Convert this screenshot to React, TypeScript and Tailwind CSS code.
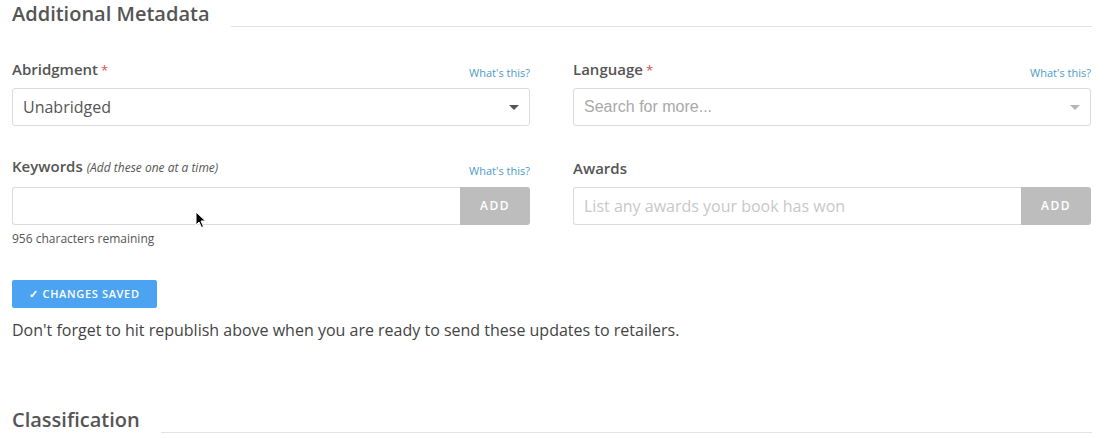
import React from "react";

const font = { fontFamily: '"Open Sans", "Liberation Sans", sans-serif' };

function Label({ children, what }: { children: React.ReactNode; what?: boolean }) {
  return (
    <div className="flex items-end justify-between h-5 mb-2">
      <div className="text-[15px] leading-5 font-semibold text-[#555]">{children}</div>
      {what && <a className="text-[11px] leading-4 text-[#4b9cc8] mb-[-1px]">What's this?</a>}
    </div>
  );
}

function Req() {
  return <span className="text-[#d9534f] text-[13px] ml-[3px] font-normal">*</span>;
}

function Caret({ color }: { color: string }) {
  return (
    <svg width="10" height="5" viewBox="0 0 10 5" className="shrink-0">
      <path d="M0 0 L10 0 L5 5 Z" fill={color} />
    </svg>
  );
}

export default function App() {
  return (
    <div className="relative w-[1114px] h-[438px] bg-white overflow-hidden pl-3 pr-[22px]" style={font}>
      <div className="flex items-end h-7">
        <h2 className="text-[20px] leading-7 font-semibold text-[#555] whitespace-nowrap">Additional Metadata</h2>
        <div className="flex-1 h-px bg-[#e3e3e3] ml-[21px] mb-[1px]" />
      </div>

      <div className="grid grid-cols-[518px_518px] gap-x-[43px] mt-8">
        <div>
          <Label what>
            Abridgment<Req />
          </Label>
          <div className="h-[38px] border border-[#dcdcdc] rounded-[3px] flex items-center justify-between pl-[10px] pr-[10px]">
            <span className="text-[16px] text-[#555]">Unabridged</span>
            <Caret color="#555" />
          </div>
        </div>
        <div>
          <Label what>
            Language<Req />
          </Label>
          <div className="h-[38px] border border-[#dcdcdc] rounded-[3px] flex items-center justify-between pl-[10px] pr-[10px]">
            <span className="text-[16px] text-[#a9a9a9]" style={{ fontFamily: '"Liberation Sans", Arial, sans-serif' }}>
              Search for more...
            </span>
            <Caret color="#b5b5b5" />
          </div>
        </div>
      </div>

      <div className="grid grid-cols-[518px_518px] gap-x-[43px] mt-8">
        <div>
          <div className="flex items-end justify-between h-5 mb-[9px]">
            <div className="text-[15px] leading-5 font-semibold text-[#555]">
              Keywords <span className="text-[12px] italic font-normal text-[#555]">(Add these one at a time)</span>
            </div>
            <a className="text-[11px] leading-4 text-[#4b9cc8] mb-[-1px]">What's this?</a>
          </div>
          <div className="flex h-[38px]">
            <div className="flex-1 border border-r-0 border-[#dcdcdc] rounded-l-[3px]" />
            <div className="w-[70px] bg-[#bdbdbd] rounded-r-[3px] flex items-center justify-center text-white text-[12px] font-semibold tracking-[0.12em]">
              ADD
            </div>
          </div>
          <div className="mt-[6px] text-[12px] leading-4 text-[#555]">956 characters remaining</div>
        </div>
        <div>
          <div className="flex items-end justify-between h-5 mb-[9px]">
            <div className="text-[15px] leading-5 font-semibold text-[#555]">Awards</div>
          </div>
          <div className="flex h-[38px]">
            <div className="flex-1 border border-r-0 border-[#dcdcdc] rounded-l-[3px] flex items-center pl-[10px]">
              <span className="text-[16px] text-[#c8c8c8]">List any awards your book has won</span>
            </div>
            <div className="w-[70px] bg-[#bdbdbd] rounded-r-[3px] flex items-center justify-center text-white text-[12px] font-semibold tracking-[0.12em]">
              ADD
            </div>
          </div>
        </div>
      </div>

      <div className="mt-[33px] w-[145px] h-7 bg-[#4ba3f1] rounded-[2px] flex items-center justify-center text-white text-[11px] font-semibold tracking-[0.06em]">
        ✓ CHANGES SAVED
      </div>
      <p className="mt-[11px] text-[16px] leading-[22px] text-[#444]">
        Don't forget to hit republish above when you are ready to send these updates to retailers.
      </p>

      <div className="flex items-end h-7 mt-[65px]">
        <h2 className="text-[20px] leading-7 font-semibold text-[#555] whitespace-nowrap">Classification</h2>
        <div className="flex-1 h-px bg-[#e3e3e3] ml-[21px] mb-[1px]" />
      </div>

      <svg className="absolute left-[195px] top-[211px]" width="12" height="18" viewBox="0 0 12 18">
        <path d="M1 1 L1 14 L4 11 L6.5 16.5 L8.5 15.5 L6 10 L10.5 10 Z" fill="#000" stroke="#fff" strokeWidth="1" />
      </svg>
    </div>
  );
}
